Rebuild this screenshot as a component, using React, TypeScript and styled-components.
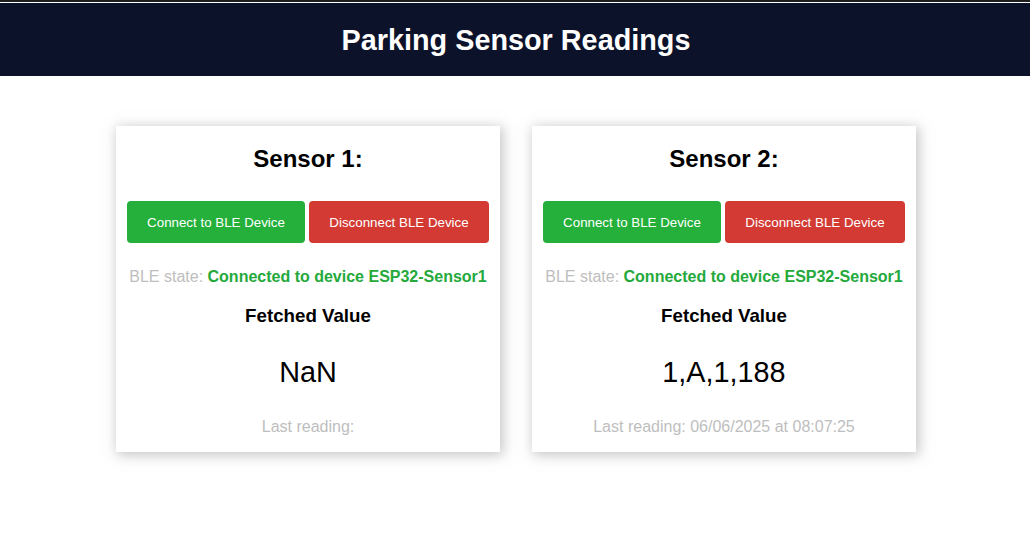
import React from "react";
import styled, { createGlobalStyle } from "styled-components";

const GlobalStyle = createGlobalStyle`
  html, body {
    margin: 0;
    padding: 0;
    background: #ffffff;
    font-family: "Liberation Sans", Arial, sans-serif;
  }
`;

const Header = styled.header`
  background: #0c1229;
  border-top: 2px solid #1e1e1e;
  box-shadow: inset 0 1px 0 #ffffff;
  height: 73px;
  padding-top: 1px;
  display: flex;
  align-items: center;
  justify-content: center;
`;

const Title = styled.h1`
  margin: 0;
  color: #ffffff;
  font-size: 28.8px;
  font-weight: bold;
  line-height: 32px;
  padding-left: 2px;
`;

const Content = styled.main`
  padding: 50px 0 40px;
`;

const Cards = styled.div`
  display: grid;
  grid-template-columns: repeat(2, 384px);
  gap: 32px;
  justify-content: center;
  padding-left: 2px;
`;

const Card = styled.section`
  background: #ffffff;
  box-shadow: 2px 2px 12px 1px rgba(140, 140, 140, 0.5);
  display: flex;
  flex-direction: column;
  align-items: center;
  padding: 19px 11px 15px;
  text-align: center;
`;

const CardTitle = styled.h2`
  margin: 0;
  font-size: 24px;
  font-weight: bold;
  line-height: 28px;
  color: #000000;
`;

const ButtonRow = styled.div`
  display: flex;
  gap: 4px;
  justify-content: center;
  margin-top: 28px;
`;

const Button = styled.button<{ $variant: "connect" | "disconnect" }>`
  border: none;
  border-radius: 4px;
  height: 42px;
  padding: 0;
  white-space: nowrap;
  font-family: "Liberation Sans", Arial, sans-serif;
  font-size: 13.333px;
  color: #ffffff;
  cursor: pointer;
  background: ${(p) => (p.$variant === "connect" ? "#24b03b" : "#d23a33")};
  width: ${(p) => (p.$variant === "connect" ? "178px" : "180px")};
`;

const StateLine = styled.p`
  margin: 24px 0 0;
  font-size: 16px;
  line-height: 20px;
  color: #bebebe;
`;

const StateValue = styled.span`
  color: #24a93b;
  font-weight: bold;
`;

const ValueLabel = styled.h3`
  margin: 18px 0 0;
  font-size: 18.72px;
  line-height: 22px;
  font-weight: bold;
  color: #000000;
`;

const Value = styled.p`
  margin: 28px 0 0;
  font-size: 28.8px;
  line-height: 34px;
  color: #000000;
`;

const LastReading = styled.p`
  margin: 28px 0 0;
  font-size: 16px;
  line-height: 20px;
  color: #bebebe;
`;

type Sensor = {
  name: string;
  device: string;
  value: string;
  last: string;
};

const sensors: Sensor[] = [
  { name: "Sensor 1:", device: "ESP32-Sensor1", value: "NaN", last: "" },
  {
    name: "Sensor 2:",
    device: "ESP32-Sensor1",
    value: "1,A,1,188",
    last: "06/06/2025 at 08:07:25",
  },
];

export default function App() {
  return (
    <>
      <GlobalStyle />
      <Header>
        <Title>Parking Sensor Readings</Title>
      </Header>
      <Content>
        <Cards>
          {sensors.map((s) => (
            <Card key={s.name}>
              <CardTitle>{s.name}</CardTitle>
              <ButtonRow>
                <Button $variant="connect">Connect to BLE Device</Button>
                <Button $variant="disconnect">Disconnect BLE Device</Button>
              </ButtonRow>
              <StateLine>
                BLE state: <StateValue>Connected to device {s.device}</StateValue>
              </StateLine>
              <ValueLabel>Fetched Value</ValueLabel>
              <Value>{s.value}</Value>
              <LastReading>Last reading: {s.last}</LastReading>
            </Card>
          ))}
        </Cards>
      </Content>
    </>
  );
}
